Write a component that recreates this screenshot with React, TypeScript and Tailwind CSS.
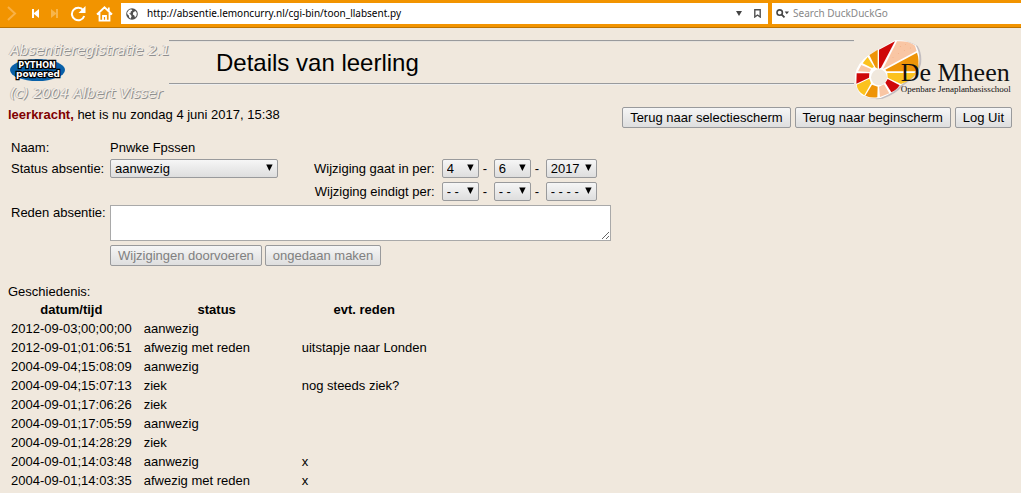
import type { ReactNode } from "react";

const history = [
  ["2012-09-03;00;00;00", "aanwezig", ""],
  ["2012-09-01;01:06:51", "afwezig met reden", "uitstapje naar Londen"],
  ["2004-09-04;15:08:09", "aanwezig", ""],
  ["2004-09-04;15:07:13", "ziek", "nog steeds ziek?"],
  ["2004-09-01;17:06:26", "ziek", ""],
  ["2004-09-01;17:05:59", "aanwezig", ""],
  ["2004-09-01;14:28:29", "ziek", ""],
  ["2004-09-01;14:03:48", "aanwezig", "x"],
  ["2004-09-01;14:03:35", "afwezig met reden", "x"],
];

function Button({ children, disabled }: { children: ReactNode; disabled?: boolean }) {
  return (
    <button
      type="button"
      disabled={disabled}
      className="h-[21px] rounded-[2px] border border-[#999a9c] bg-linear-to-b from-[#f6f6f6] to-[#dedede] px-[7px] leading-[19px] whitespace-nowrap text-black disabled:text-[#808080]"
    >
      {children}
    </button>
  );
}

function Select({ id, label, options, width }: { id: string; label?: string; options: string[]; width: string }) {
  return (
    <span className={`relative inline-flex ${width}`}>
      <select
        id={id}
        aria-label={label}
        className="h-[19px] w-full appearance-none rounded-[2px] border border-[#999a9c] bg-linear-to-b from-[#f6f6f6] to-[#dedede] pl-1 leading-[17px] text-black"
      >
        {options.map((o) => (
          <option key={o}>{o}</option>
        ))}
      </select>
      <svg viewBox="0 0 7 7" className="pointer-events-none absolute top-[5px] right-[5px] h-[7px] w-[7px]" aria-hidden="true">
        <path d="M.2 .4H6.6L3.4 7Z" />
      </svg>
    </span>
  );
}

function DateFields({ id, name, values }: { id: string; name: string; values: string[] }) {
  return (
    <div className="flex items-center">
      <Select id={id} options={[values[0]]} width="w-[37px]" />
      <span className="w-[15px] pl-1">-</span>
      <Select id={`${id}-maand`} label={`${name} maand`} options={[values[1]]} width="w-[37px]" />
      <span className="w-[15px] pl-1">-</span>
      <Select id={`${id}-jaar`} label={`${name} jaar`} options={[values[2]]} width="w-[51px]" />
    </div>
  );
}

function BrowserBar() {
  return (
    <div className="flex h-7 items-center border-b border-[#bd7300] bg-[#f29400] font-['Noto_Sans',sans-serif] text-[10px]">
      <div className="flex w-[121px] shrink-0 items-center">
        <button type="button" aria-label="Vooruit" className="ml-[7px]">
          <svg viewBox="0 0 10 15" className="h-[15px] w-[10px]" fill="none" stroke="#f8b147" strokeWidth="2">
            <path d="M1 1L8 7.5L1 14" />
          </svg>
        </button>
        <button type="button" aria-label="Eerste" className="ml-[14px]">
          <svg viewBox="0 0 9 9" className="h-[9px] w-[9px]" fill="#fff">
            <path d="M1 0H3V4L8 0V9L3 5V9H1Z" />
          </svg>
        </button>
        <button type="button" aria-label="Laatste" className="ml-[11px]">
          <svg viewBox="0 0 9 9" className="h-[9px] w-[9px]" fill="#f7b54b">
            <path d="M0 0L5 4V0H7V9H5V5L0 9Z" />
          </svg>
        </button>
        <button type="button" aria-label="Herladen" className="ml-[10px]">
          <svg viewBox="0 0 17 16" className="h-4 w-[17px]" fill="none" stroke="#fff" strokeWidth="2">
            <path d="M13.3 4.3A6.3 6.3 0 1 0 14.2 10" />
            <path d="M15.5 0V7H8.5Z" fill="#fff" stroke="none" />
          </svg>
        </button>
        <button type="button" aria-label="Startpagina" className="ml-[9px]">
          <svg viewBox="0 0 17 16" className="h-4 w-[17px]" fill="none" stroke="#fff" strokeWidth="1.8">
            <path d="M1 8.5L8.5 1.3L16 8.5M3.5 7V14.7H13.5V7M7 14.5V10H10V14.5M12.8 5V1.5" />
          </svg>
        </button>
      </div>
      <div className="flex h-[21px] flex-1 items-center bg-white pr-[7px] pl-[5px]">
        <svg viewBox="0 0 12 12" className="h-3 w-3" aria-hidden="true">
          <circle cx="6" cy="6" r="5.8" fill="#505050" />
          <path d="M1.2 4.5L3 2.1L5.2 1.3L6.4 2.6L4.8 3.6L4.5 5.2L3 5.6L4.8 6.8L5.6 8.2L4.6 10.7L3.2 9.4L2.8 7.4L1.2 6ZM7.3 4.2L9.4 3L10.8 5L10.5 7.6L9 9.5L8.3 7.4L6.8 6.4Z" fill="#fff" />
        </svg>
        <input
          aria-label="Adres"
          defaultValue="http://absentie.lemoncurry.nl/cgi-bin/toon_llabsent.py"
          className="ml-[9px] min-w-0 flex-1 text-black"
        />
        <button type="button" aria-label="Adreslijst">
          <svg viewBox="0 0 6 5" className="h-[5px] w-[6px]" fill="#444">
            <path d="M0 0H6L3 5Z" />
          </svg>
        </button>
        <button type="button" aria-label="Bladwijzer" className="ml-3">
          <svg viewBox="0 0 7 9" className="h-[9px] w-[7px]" fill="none" stroke="#505050" strokeWidth="1.4">
            <path d="M.8 .8H6.2V8L3.5 6L.8 8Z" />
          </svg>
        </button>
      </div>
      <div className="ml-1 flex h-[21px] w-[249px] shrink-0 items-center bg-white pl-1">
        <svg viewBox="0 0 13 9" className="h-[9px] w-[13px]" fill="none" stroke="#444" aria-hidden="true">
          <circle cx="3.7" cy="3.6" r="2.7" strokeWidth="1.6" />
          <path d="M5.7 5.6L8.5 8.4" strokeWidth="1.8" />
          <path d="M8.7 2.5H13L10.8 5.2Z" fill="#444" stroke="none" />
        </svg>
        <input
          aria-label="Zoeken"
          placeholder="Search DuckDuckGo"
          className="ml-1 min-w-0 flex-1 placeholder:text-[#888]"
        />
      </div>
    </div>
  );
}

function SchoolLogo() {
  const wheel =
    "M540 147L588 121Q620 118 650 136Q664 158 660 190Q655 222 605 256Q585 280 545 294Q513 299 488 286Q467 265 468 225Q473 190 512 163Z";
  return (
    <svg viewBox="465 120 477 180" className="h-[60px] w-[159px]" role="img" aria-label="De Mheen">
      <path d={wheel} fill="#c3bec0" transform="translate(6 2)" />
      <path d={wheel} fill="#fff" />
      <path d="M540 149L588 124L546 203L540 206Z" fill="#cf0808" />
      <path d="M594 124Q628 121 648 137L653 153L552 207Z" fill="#f9c6a4" />
      <path d="M654 158Q662 180 656 214H563L559 209Z" fill="#ee9408" />
      <path d="M565 219H652Q636 242 606 252L566 233Z" fill="#fcc21e" />
      <path d="M566 237L602 256Q592 271 577 277L559 248Z" fill="#cf0808" />
      <path d="M540 260L555 253L571 280L543 291Z" fill="#f9c6a4" />
      <path d="M519 254L536 260L535 292Q516 295 499 287Z" fill="#ee9408" />
      <path d="M473 254L511 236L516 250L496 286Q475 274 473 254Z" fill="#fcc21e" />
      <path d="M473 220H511L510 233L472 251Z" fill="#cf0808" />
      <path d="M477 214L487 195L516 207L512 216Z" fill="#f9c6a4" />
      <path d="M491 190L506 171L525 201L519 204Z" fill="#fcc21e" />
      <path d="M511 165L536 149V206L529 202Z" fill="#ee9408" />
      <circle cx="540" cy="232" r="24" fill="#f0e8dd" />
      <g fill="#ee9c70">
        <circle cx="604" cy="140" r="1.2" />
        <circle cx="620" cy="134" r="1.2" />
        <circle cx="634" cy="144" r="1.2" />
        <circle cx="616" cy="151" r="1.2" />
        <circle cx="598" cy="160" r="1.2" />
        <circle cx="582" cy="173" r="1.2" />
      </g>
      <text x="605" y="243" fontFamily="Liberation Serif, serif" fontSize="78" fill="#111">De Mheen</text>
      <text x="605" y="276" fontFamily="Liberation Serif, serif" fontSize="27" fill="#111">Openbare Jenaplanbasisschool</text>
    </svg>
  );
}

function PythonBadge() {
  return (
    <svg viewBox="0 0 55 22" className="h-[22px] w-[55px]" role="img" aria-label="Python powered">
      <ellipse cx="27.5" cy="11" rx="27.5" ry="11" fill="#0860a8" />
      <g fontFamily="DejaVu Sans, sans-serif" fontWeight="bold" fill="#fff" stroke="#000" strokeWidth="2.5" paintOrder="stroke" textAnchor="middle">
        <text x="27" y="9" fontSize="8">PYTHON</text>
        <text x="28" y="18" fontSize="9">powered</text>
      </g>
    </svg>
  );
}

const embossed =
  "font-['DejaVu_Sans',sans-serif] text-[14px] font-extralight italic leading-[15px] whitespace-nowrap text-[#f4efe8] [text-shadow:1px_1px_0_#8f8f8f,-1px_0_0_#c4c0bb]";

export default function App() {
  return (
    <div className="min-h-screen bg-[#f0e8dd] font-['Liberation_Sans',Arial,sans-serif] text-[13px] leading-[15px] text-black">
      <BrowserBar />
      <main className="px-2 pt-3">
        <header className="flex">
          <div className="flex w-[161px] shrink-0 flex-col items-start pt-[3px] pl-[2px]">
            <span className={embossed}>Absentieregistratie 2.1</span>
            <span className="my-px">
              <PythonBadge />
            </span>
            <span className={`${embossed} pt-1`}>(c) 2004 Albert Visser</span>
          </div>
          <div className="mb-4 flex flex-1 flex-col justify-between">
            <hr className="h-[2px] border-t border-b border-t-[#999a9c] border-b-[#e6e2dc]" />
            <h1 className="pl-[47px] text-2xl leading-7">Details van leerling</h1>
            <hr className="h-[2px] border-t border-b border-t-[#999a9c] border-b-[#eeeeee]" />
          </div>
          <SchoolLogo />
        </header>

        <div className="mt-[6px] flex items-start justify-between pr-px">
          <p>
            <b className="text-[#800000]">leerkracht,</b> het is nu zondag 4 juni 2017, 15:38
          </p>
          <div className="flex gap-1">
            <Button>Terug naar selectiescherm</Button>
            <Button>Terug naar beginscherm</Button>
            <Button>Log Uit</Button>
          </div>
        </div>

        <form className="mt-3 grid w-fit grid-cols-[99px_501px] gap-y-1 pl-[3px]">
          <span>Naam:</span>
          <span>Pnwke Fpssen</span>
          <label htmlFor="status" className="pt-[2px]">Status absentie:</label>
          <div className="flex gap-9">
            <Select id="status" options={["aanwezig", "afwezig met reden", "ziek"]} width="w-[168px]" />
            <div className="grid grid-cols-[auto_auto] items-center justify-items-end gap-x-[7px] gap-y-1">
              <label htmlFor="van">Wijziging gaat in per:</label>
              <DateFields id="van" name="Ingang" values={["4", "6", "2017"]} />
              <label htmlFor="tot">Wijziging eindigt per:</label>
              <DateFields id="tot" name="Einde" values={["- -", "- -", "- - - -"]} />
            </div>
          </div>
          <label htmlFor="reden">Reden absentie:</label>
          <textarea id="reden" className="block h-9 w-full border border-[#a9a9a9] bg-white" />
          <div className="col-start-2 flex gap-[3px]">
            <Button disabled>Wijzigingen doorvoeren</Button>
            <Button disabled>ongedaan maken</Button>
          </div>
        </form>

        <table className="mt-[18px]">
          <caption className="pb-px text-left">Geschiedenis:</caption>
          <thead>
            <tr>
              <th className="py-[2px] pr-3 pl-[3px]">datum/tijd</th>
              <th className="w-[158px] py-[2px] pr-3">status</th>
              <th className="py-[2px]">evt. reden</th>
            </tr>
          </thead>
          <tbody>
            {history.map(([date, status, reason]) => (
              <tr key={date}>
                <td className="py-[2px] pr-3 pl-[3px]">{date}</td>
                <td className="py-[2px] pr-3">{status}</td>
                <td className="py-[2px]">{reason}</td>
              </tr>
            ))}
          </tbody>
        </table>
      </main>
    </div>
  );
}
